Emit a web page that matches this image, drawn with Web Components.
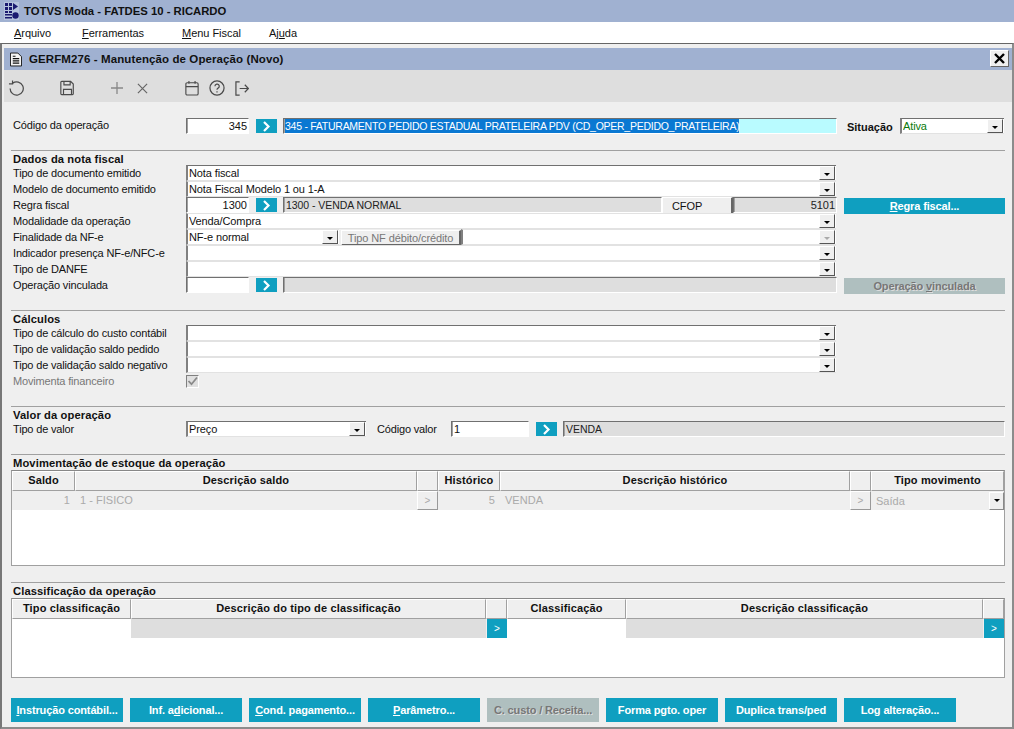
<!DOCTYPE html>
<html lang="pt-BR"><head><meta charset="utf-8"><title>TOTVS Moda</title>
<style>
html,body{margin:0;padding:0;background:#efefef;}
body{font:11px "Liberation Sans",Arial,sans-serif;color:#111;width:1014px;height:729px;overflow:hidden;}
</style></head><body>
<tv-app>
  <tv-apptitle>TOTVS Moda - FATDES 10 - RICARDO</tv-apptitle>
  <tv-menu></tv-menu>
  <tv-window>
    <tv-wintitle>GERFM276 - Manutenção de Operação (Novo)</tv-wintitle>
    <tv-toolbar></tv-toolbar>
    <tv-row style="margin-top:16px">
      <tv-label style="margin-top:-2px">Código da operação</tv-label>
      <tv-input w="63" value="345" right></tv-input>
      <tv-go></tv-go>
      <tv-input w="554" value="345 - FATURAMENTO PEDIDO ESTADUAL PRATELEIRA PDV (CD_OPER_PEDIDO_PRATELEIRA)" sel></tv-input>
      <tv-label strong style="width:53px;margin:2px 0 0 10px;">Situação</tv-label>
      <tv-combo w="104" value="Ativa" green></tv-combo>
    </tv-row>
    <tv-section heading="Dados da nota fiscal" style="margin-top:16px">
      <tv-row><tv-label>Tipo de documento emitido</tv-label><tv-combo w="650" value="Nota fiscal" top></tv-combo></tv-row>
      <tv-row><tv-label>Modelo de documento emitido</tv-label><tv-combo w="650" value="Nota Fiscal Modelo 1 ou 1-A"></tv-combo></tv-row>
      <tv-row><tv-label>Regra fiscal</tv-label><tv-input w="63" value="1300" right></tv-input><tv-go></tv-go><tv-input w="379" value="1300 - VENDA NORMAL" ro></tv-input><tv-plain style="margin-top:2px">CFOP</tv-plain><tv-input w="104" value="5101" right ro></tv-input><tv-btn w="161" h="16" style="margin:2px 0 0 7px"><u>R</u>egra fiscal...</tv-btn></tv-row>
      <tv-row><tv-label>Modalidade da operação</tv-label><tv-combo w="650" value="Venda/Compra"></tv-combo></tv-row>
      <tv-row><tv-label>Finalidade da NF-e</tv-label><tv-combo w="153" value="NF-e normal"></tv-combo><tv-plain dis style="margin-top:2px">Tipo NF débito/crédito</tv-plain><tv-combo w="375" dim></tv-combo></tv-row>
      <tv-row><tv-label>Indicador presença NF-e/NFC-e</tv-label><tv-combo w="650"></tv-combo></tv-row>
      <tv-row><tv-label>Tipo de DANFE</tv-label><tv-combo w="650"></tv-combo></tv-row>
      <tv-row><tv-label>Operação vinculada</tv-label><tv-input w="63"></tv-input><tv-go></tv-go><tv-input w="554" ro></tv-input><tv-btn w="161" h="16" off style="margin:2px 0 0 7px">Operação <u>v</u>inculada</tv-btn></tv-row>
    </tv-section>
    <tv-section heading="Cálculos" style="margin-top:17px">
      <tv-row><tv-label>Tipo de cálculo do custo contábil</tv-label><tv-combo w="650" top></tv-combo></tv-row>
      <tv-row><tv-label>Tipo de validação saldo pedido</tv-label><tv-combo w="650"></tv-combo></tv-row>
      <tv-row><tv-label>Tipo de validação saldo negativo</tv-label><tv-combo w="650"></tv-combo></tv-row>
      <tv-row><tv-label muted>Movimenta financeiro</tv-label><tv-check></tv-check></tv-row>
    </tv-section>
    <tv-section heading="Valor da operação" style="margin-top:17px">
      <tv-row><tv-label>Tipo de valor</tv-label><tv-combo w="180" value="Preço" top></tv-combo><tv-label style="width:60px;margin-left:11px">Código valor</tv-label><tv-input w="78" value="1" style="margin-left:14px"></tv-input><tv-go></tv-go><tv-input w="442" value="VENDA" ro></tv-input></tv-row>
    </tv-section>
    <tv-section low heading="Movimentação de estoque da operação" style="margin-top:17px">
      <tv-grid h="96" cols="63 342 21 62 350 21 133">
        <tv-th>Saldo</tv-th><tv-th>Descrição saldo</tv-th><tv-th></tv-th><tv-th>Histórico</tv-th><tv-th>Descrição histórico</tv-th><tv-th></tv-th><tv-th>Tipo movimento</tv-th>
        <tv-td right dim>1</tv-td><tv-td dim>1 - FISICO</tv-td><tv-td mini dim>&gt;</tv-td><tv-td right dim>5</tv-td><tv-td dim>VENDA</tv-td><tv-td mini dim>&gt;</tv-td><tv-td dim arrow>Saída</tv-td>
      </tv-grid>
    </tv-section>
    <tv-section low heading="Classificação da operação" style="margin-top:16px">
      <tv-grid h="80" cols="119 355 21 119 357 21">
        <tv-th>Tipo classificação</tv-th><tv-th>Descrição do tipo de classificação</tv-th><tv-th></tv-th><tv-th>Classificação</tv-th><tv-th>Descrição classificação</tv-th><tv-th></tv-th>
        <tv-td white></tv-td><tv-td ro></tv-td><tv-td go>&gt;</tv-td><tv-td white></tv-td><tv-td ro></tv-td><tv-td go>&gt;</tv-td>
      </tv-grid>
    </tv-section>
    <tv-actions>
      <tv-btn w="112" h="24"><u>I</u>nstrução contábil...</tv-btn>
      <tv-btn w="112" h="24">Inf. a<u>d</u>icional...</tv-btn>
      <tv-btn w="112" h="24"><u>C</u>ond. pagamento...</tv-btn>
      <tv-btn w="112" h="24"><u>P</u>arâmetro...</tv-btn>
      <tv-btn w="112" h="24" off>C. custo / Receita...</tv-btn>
      <tv-btn w="112" h="24">Forma pgto. oper</tv-btn>
      <tv-btn w="112" h="24">Duplica trans/ped</tv-btn>
      <tv-btn w="112" h="24">Log alteração...</tv-btn>
    </tv-actions>
  </tv-window>
</tv-app>
<script>
function def(name, render){
  customElements.define(name, class extends HTMLElement{
    connectedCallback(){
      if(this.shadowRoot) return;
      this.attachShadow({mode:'open'}).innerHTML = render(this);
    }
  });
}
const a=(e,n)=>e.getAttribute(n)||'';
const esc=s=>s.replace(/&/g,'&amp;').replace(/</g,'&lt;');
const FONT='"Liberation Sans",Arial,sans-serif';
def('tv-app',()=>`<style>:host{display:block;width:1014px;height:729px;overflow:hidden}</style><slot></slot>`);
def('tv-apptitle',()=>`<style>:host{display:flex;align-items:center;height:22px;background:#a0b1d1;font:bold 11.3px ${FONT};color:#111}
svg{margin:0 5px 0 4px;flex:none}</style>
<svg width="15" height="18" viewBox="0 0 15 18"><rect width="15" height="18" fill="#b5c3dd"/><g fill="#1a1a70"><rect x="1" y="1" width="3" height="3"/><rect x="5" y="1" width="3" height="3"/><path d="M9 1l5 3.500L9 8z"/><rect x="1" y="5" width="3" height="3"/><rect x="5" y="5" width="3" height="3"/><rect x="1" y="9" width="3" height="2"/><rect x="5" y="9" width="3" height="2"/><rect x="1" y="12" width="7" height="1.500"/><rect x="1" y="15" width="7" height="1.500"/><circle cx="11.500" cy="13.500" r="3.200"/></g></svg><slot></slot>`);
def('tv-menu',()=>`<style>:host{display:grid;grid-template-columns:68px 100px 87px auto;height:21px;align-items:center;background:#fff;font:11px ${FONT};padding:1px 0 0 14px;box-sizing:border-box;letter-spacing:-.03px}</style>
<span><u>A</u>rquivo</span><span><u>F</u>erramentas</span><span><u>M</u>enu Fiscal</span><span>Aj<u>u</u>da</span>`);
def('tv-window',()=>`<style>:host{display:block;box-sizing:border-box;height:686px;background:#efefef;border-top:1px solid #666;border-left:2px solid #777;border-right:2px solid #8c8c8c;border-bottom:2px solid #8c8c8c;padding:4px 0 0 2px}</style><slot></slot>`);
def('tv-wintitle',()=>`<style>:host{display:flex;align-items:center;height:22px;background:#a0b1d1;font:bold 11.5px ${FONT};color:#111;letter-spacing:.1px;position:relative}
svg{margin:0 7px 0 6px;flex:none}
.x{position:absolute;right:3px;top:2px;width:17px;height:15px;background:#efefef;border:1px solid;border-color:#fff #666 #666 #fff;display:flex;align-items:center;justify-content:center}</style>
<svg width="12" height="15" viewBox="0 0 13 15"><path d="M.5.5h8l4 4v10H.5z" fill="#f4f4f4" stroke="#111"/><path d="M3 4h3M3 6.500h7M3 9h7M3 11.500h7" stroke="#111" stroke-width="1.300"/></svg>
<slot></slot><div class="x"><svg style="margin:0" width="11" height="11" viewBox="0 0 11 11"><path d="M1 1l9 9M10 1l-9 9" stroke="#000" stroke-width="2.400"/></svg></div>`);
def('tv-toolbar',()=>`<style>:host{display:flex;align-items:center;height:32px;background:#dedede;padding-top:4px;box-sizing:border-box}
svg{flex:none;fill:none;stroke:#4a4a4a;stroke-width:1.300}</style>
<svg style="margin-left:4px" width="17" height="16" viewBox="0 0 18 17"><path d="M5 3.500A7 7 0 1 1 2.200 9M4.800 .5v3.500H1"/></svg>
<svg style="margin-left:35px" width="15" height="16" viewBox="0 0 16 18"><path d="M1.500 1.500h10l3 3v11a1 1 0 0 1-1 1h-12a1 1 0 0 1-1-1v-13a1 1 0 0 1 1-1zM4 1.500v4h7v-4M3.500 16.500v-6h9v6"/></svg>
<svg style="margin-left:36px;stroke:#888;stroke-width:1.500" width="12" height="12" viewBox="0 0 14 14"><path d="M7 0v14M0 7h14"/></svg>
<svg style="margin-left:14px;stroke:#666" width="11" height="11" viewBox="0 0 12 12"><path d="M1 1l10 10M11 1L1 11"/></svg>
<svg style="margin-left:37px" width="14" height="16" viewBox="0 0 16 18"><rect x="1" y="3" width="14" height="14" rx="1.500"/><path d="M1 7.500h14M4.500 1v3M11.500 1v3"/></svg>
<svg style="margin-left:10px" width="16" height="16" viewBox="0 0 17 17"><circle cx="8.500" cy="8.500" r="7.500"/><path d="M6.300 6.600a2.300 2.300 0 1 1 3.400 2c-.8.500-1.200.9-1.200 1.800M8.500 12v1.200"/></svg>
<svg style="margin-left:10px" width="14" height="15" viewBox="0 0 15 16"><path d="M5 1H1v14h4M5 8h9M10.500 4l3.800 4-3.800 4"/></svg>`);
def('tv-row',()=>`<style>:host{display:flex;align-items:center;height:16px;padding-left:9px;position:relative}</style><slot></slot>`);
def('tv-label',e=>`<style>:host{display:block;width:173px;flex:none;white-space:nowrap;letter-spacing:${e.hasAttribute('strong')?'-.02px':'-.17px'};color:${e.hasAttribute('muted')?'#777':'#111'};${e.hasAttribute('strong')?'font-weight:bold;':''}}</style><slot></slot>`);
def('tv-input',e=>{
  const ro=e.hasAttribute('ro'), sel=e.hasAttribute('sel'), r=e.hasAttribute('right');
  return `<style>:host{display:block;box-sizing:border-box;flex:none;width:${a(e,'w')}px;height:16px;background:${ro?'#dedede':sel?'#b9fbff':'#fff'};
  border-style:solid;border-width:1px;border-color:#707070 #fff #fff #707070;box-shadow:inset 1px 0 0 #a0a0a0;padding:0 ${r?'1px':'0'} 0 ${sel?'1px':'2px'};line-height:14px;text-align:${r?'right':'left'};white-space:nowrap;overflow:hidden;font-size:${(sel||(ro&&!r))?'10.5px':'11px'};letter-spacing:${sel?'-.26px':ro?'-.05px':'0'};color:${ro?'#222':'#111'}}
  .s{background:#0a78d2;color:#fff;display:inline-block}</style>${sel?`<span class="s">${esc(a(e,'value'))}</span>`:esc(a(e,'value'))}`});
def('tv-go',()=>`<style>:host{display:flex;flex:none;align-items:center;justify-content:center;width:21px;height:14px;background:#0f9fc0;margin:0 6px 0 7px}</style><svg width="9" height="11" viewBox="0 0 9 11"><path d="M2 1l4.500 4.500L2 10" fill="none" stroke="#fff" stroke-width="2.200"/></svg>`);
def('tv-combo',e=>{
  const t=e.hasAttribute('top'), g=e.hasAttribute('green'), d=e.hasAttribute('dim');
  return `<style>:host{display:flex;flex:none;box-sizing:border-box;width:${a(e,'w')}px;height:16px;background:#fff;border-left:2px solid #808080;border-top:1px solid ${t||g?'#707070':'#e2e2e2'};border-bottom:1px solid #e2e2e2;align-items:center;padding:0 1px;position:relative}
  span{flex:1;white-space:nowrap;overflow:hidden;line-height:13px;letter-spacing:-.12px;color:${g?'#0a7a0a':'#111'}}
  b{display:flex;box-sizing:border-box;width:16px;height:14px;background:#efefef;border:1px solid;border-color:#fff #555 #555 #fff;align-items:center;justify-content:center;flex:none}
  i{width:0;height:0;border:3px solid transparent;border-top:3px solid ${d?'#aaa':'#000'};border-bottom:0;margin-top:2px}</style><span>${esc(a(e,'value'))}</span><b><i></i></b>`});
def('tv-btn',e=>`<style>:host{display:flex;flex:none;box-sizing:border-box;align-items:center;justify-content:center;width:${a(e,'w')}px;height:${a(e,'h')}px;background:${e.hasAttribute('off')?'#afbfbf':'#0f9fc0'};color:${e.hasAttribute('off')?'#777':'#fff'};font-weight:bold;letter-spacing:-.13px;white-space:pre;${e.hasAttribute('off')?'text-shadow:1px 1px 0 #ddd;':''}}</style><span><slot></slot></span>`);
def('tv-plain',e=>{const d=e.hasAttribute('dis');return `<style>:host{display:flex;flex:none;box-sizing:border-box;align-items:center;${d?'justify-content:center;width:120px;height:16px;margin-left:2px;color:#777;':'padding-left:9px;width:71px;height:18px;'}background:#efefef;border:1px solid;border-color:#fff #666 #666 #fff;border-bottom-width:2px;border-right-width:2px;letter-spacing:-.1px}</style><span><slot></slot></span>`});
def('tv-check',()=>`<style>:host{display:flex;box-sizing:border-box;width:13px;height:13px;background:#e0e0e0;border:1px solid;border-color:#808080 #fff #fff #808080;align-items:center;justify-content:center}</style><svg width="11" height="11" viewBox="0 0 11 11"><path d="M1.500 5l3 3.200L10 1.500" fill="none" stroke="#8a8a8a" stroke-width="1.800"/></svg>`);
def('tv-section',e=>`<style>:host{display:block}
.line{height:1px;background:#a0a0a0;margin-left:7px;width:994px}
h3{margin:0;font:bold 11.2px ${FONT};height:${e.hasAttribute('low')?'14px':'13px'};line-height:14px;padding:1px 0 0 9px;color:#111;letter-spacing:.1px}</style><div class="line"></div><h3>${esc(a(e,'heading'))}</h3><slot></slot>`);
def('tv-grid',e=>{
  const cols=a(e,'cols').split(' ').map(n=>n+'px').join(' ');
  return `<style>:host{display:grid;box-sizing:border-box;grid-template-columns:${cols};grid-template-rows:20px 19px;align-content:start;width:994px;height:${a(e,'h')}px;margin-left:7px;background:#fff;border:1px solid #a0a0a0;border-top-color:#888}</style><slot></slot>`});
def('tv-th',()=>`<style>:host{display:flex;box-sizing:border-box;align-items:center;justify-content:center;background:#efefef;border-left:1px solid #fff;border-right:1px solid #a0a0a0;border-bottom:1px solid #a0a0a0;border-top:1px solid #fff;padding-bottom:2px;font-weight:bold;white-space:nowrap;letter-spacing:.14px}</style><span><slot></slot></span>`);
def('tv-td',e=>{
  const mini=e.hasAttribute('mini'), go=e.hasAttribute('go'), right=e.hasAttribute('right'), ro=e.hasAttribute('ro'), ar=e.hasAttribute('arrow');
  const bg=go?'#0f9fc0':ro?'#dedede':e.hasAttribute('white')?'#fff':'#efefef';
  return `<style>:host{display:flex;box-sizing:border-box;align-items:center;background:${bg};color:${go?'#fff':'#aaa'};white-space:nowrap;height:19px;padding:0 ${right?'5px':'0'} ${mini||go||ar?'0':'2px'} ${right||mini||go?'0':'5px'};${mini?'border:1px solid;border-color:#fff #999 #999 #fff;':''}${go?'border-left:1px solid #efefef;':''}font-size:${mini||go?'10px':'11px'};letter-spacing:.02px}
  span{flex:1}b{display:flex;width:15px;height:18px;align-items:center;justify-content:center;background:#efefef;border:1px solid;border-color:#fff #888 #888 #fff;box-sizing:border-box}i{width:0;height:0;border:3px solid transparent;border-top:3px solid #000;border-bottom:0}</style><span style="${right?'text-align:right':mini||go?'text-align:center':''}"><slot></slot></span>${ar?'<b><i></i></b>':''}`});
def('tv-actions',()=>`<style>:host{display:flex;gap:7px;margin:20px 0 0 7px}</style><slot></slot>`);
</script>
</body></html>
